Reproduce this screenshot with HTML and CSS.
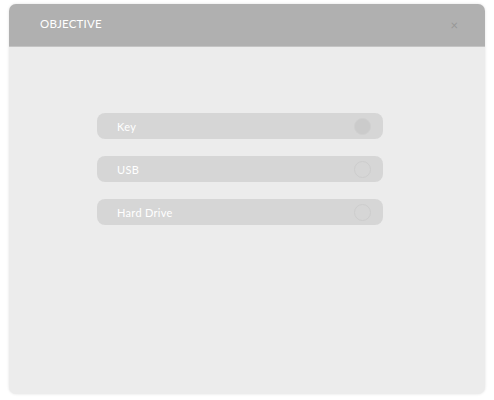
FILE: index.html
```html
<!DOCTYPE html>
<html>
<head>
<meta charset="utf-8">
<link rel="stylesheet" href="styles.css">
</head>
<body>
<div class="modal">
  <div class="modal-header">
    <span class="title">OBJECTIVE</span>
    <span class="close">&times;</span>
  </div>
  <div class="modal-body">
    <ul class="options">
      <li class="option selected"><span class="label">Key</span><span class="radio"></span></li>
      <li class="option"><span class="label">USB</span><span class="radio"></span></li>
      <li class="option"><span class="label">Hard Drive</span><span class="radio"></span></li>
    </ul>
  </div>
</div>
</body>
</html>
```
FILE: styles.css
```css
html, body {
  margin: 0;
  padding: 0;
  background: #ffffff;
  font-family: Lato, "Open Sans", sans-serif;
}
body {
  padding: 4px 9px 6px 9px;
}
.modal {
  width: 476px;
  height: 390px;
  border-radius: 7px;
  overflow: hidden;
  background: #ececec;
  box-shadow: 0 0 3px rgba(0, 0, 0, 0.12);
  display: flex;
  flex-direction: column;
}
.modal-header {
  height: 42px;
  background: #b0b0b0;
  border-bottom: 1px solid #c4c4c4;
  display: flex;
  align-items: center;
  justify-content: space-between;
  padding: 0 27px 0 31px;
  flex: none;
}
.title {
  color: #ffffff;
  font-size: 11.5px;
  letter-spacing: 0.2px;
  margin-top: -3px;
}
.close {
  color: #979797;
  font-size: 13px;
  line-height: 1;
  margin-top: 0;
}
.modal-body {
  flex: 1;
  padding: 66px 0 0 88px;
}
.options {
  list-style: none;
  margin: 0;
  padding: 0;
  width: 286px;
  display: flex;
  flex-direction: column;
  gap: 17px;
}
.option {
  height: 26px;
  background: #d6d6d6;
  border-radius: 8px;
  display: flex;
  align-items: center;
  justify-content: space-between;
  padding: 0 12px 0 20px;
}
.label {
  color: #ffffff;
  font-size: 11px;
  letter-spacing: 0.3px;
}
.radio {
  width: 15px;
  height: 15px;
  border-radius: 50%;
  border: 1px solid #cdcdcd;
  box-sizing: content-box;
}
.option.selected .radio {
  background: #cbcbcb;
  border-color: #d0d0d0;
}
```
